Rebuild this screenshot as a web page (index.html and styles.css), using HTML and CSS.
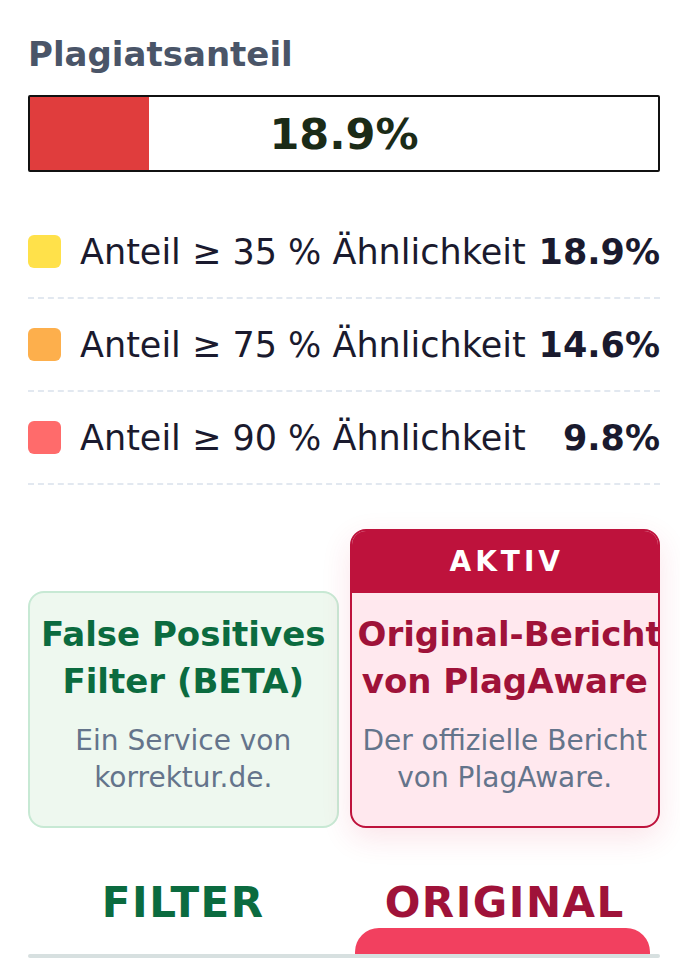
FILE: index.html
```html
<!DOCTYPE html>
<html lang="de">
<head>
<meta charset="UTF-8" />
<meta name="viewport" content="width=device-width, initial-scale=1" />
<title>Plagiatsprüfung - Ergebnis</title>
<link rel="stylesheet" href="styles.css">
</head>
<body>

<main class="report">
  <h2 class="report-title">Plagiatsanteil</h2>

  <div class="meter">
    <div class="meter-fill" style="width:18.9%;"></div>
    <span class="meter-value">18.9%</span>
  </div>

  <ul class="legend">
    <li class="legend-row">
      <span class="swatch swatch-yellow"></span>
      <span class="legend-label">Anteil ≥ 35 % Ähnlichkeit</span>
      <span class="legend-value">18.9%</span>
    </li>
    <li class="legend-row">
      <span class="swatch swatch-orange"></span>
      <span class="legend-label">Anteil ≥ 75 % Ähnlichkeit</span>
      <span class="legend-value">14.6%</span>
    </li>
    <li class="legend-row">
      <span class="swatch swatch-red"></span>
      <span class="legend-label">Anteil ≥ 90 % Ähnlichkeit</span>
      <span class="legend-value">9.8%</span>
    </li>
  </ul>

  <div class="modes">
    <div class="mode mode-filter">
      <div class="mode-body">
        <h3 class="mode-title">False Positives Filter (BETA)</h3>
        <p class="mode-text">Ein Service von korrektur.de.</p>
      </div>
    </div>
    <div class="mode mode-original active">
      <div class="mode-badge">AKTIV</div>
      <div class="mode-body">
        <h3 class="mode-title"><span class="nowrap">Original-Bericht</span> von PlagAware</h3>
        <p class="mode-text">Der offizielle Bericht von PlagAware.</p>
      </div>
    </div>
  </div>

  <div class="tabs">
    <button class="tab tab-filter">FILTER</button>
    <button class="tab tab-original active">ORIGINAL<span class="tab-indicator"></span></button>
  </div>
  <div class="tabs-line"></div>
</main>

</body>
</html>
```

FILE: styles.css
```css
* {
  box-sizing: border-box;
}
body, html {
  margin: 0; padding: 0;
  background: #fff;
  font-family: "DejaVu Sans", Verdana, sans-serif;
  color: #1a1a2e;
}
.report {
  padding: 34px 20px 0 28px;
}
.report-title {
  margin: 0;
  font-size: 34px;
  line-height: 40px;
  font-weight: 700;
  color: #4a5568;
}
.meter {
  position: relative;
  margin-top: 21px;
  height: 77px;
  border: 2px solid #111;
  border-radius: 2px;
  display: flex;
  align-items: center;
  justify-content: center;
}
.meter-fill {
  position: absolute;
  left: 0; top: 0; bottom: 0;
  background: #e03d3d;
}
.meter-value {
  position: relative;
  font-size: 43px;
  font-weight: 700;
  color: #1b2b17;
}
.legend {
  list-style: none;
  margin: 34px 0 0 0;
  padding: 0;
}
.legend-row {
  display: flex;
  align-items: center;
  height: 93px;
  border-bottom: 2px dashed #e2e8f0;
  font-size: 35px;
}
.swatch {
  width: 33px;
  height: 33px;
  border-radius: 6px;
  margin-right: 19px;
  flex-shrink: 0;
}
.swatch-yellow { background: #ffe14a; }
.swatch-orange { background: #fdaf4c; }
.swatch-red { background: #ff6b6b; }
.legend-label {
  flex: 1;
  white-space: nowrap;
}
.legend-value {
  font-weight: 700;
}
.modes {
  display: grid;
  grid-template-columns: 1fr 1fr;
  gap: 11px;
  align-items: end;
  margin-top: 44px;
}
.mode {
  border-radius: 16px;
  border: 2px solid;
  overflow: hidden;
  text-align: center;
}
.mode-body {
  padding: 18px 6px 30px 6px;
}
.mode-title {
  margin: 0;
  font-size: 34px;
  line-height: 47px;
  font-weight: 700;
}
.mode-text {
  margin: 17px 0 0 0;
  font-size: 28px;
  line-height: 37px;
  color: #64748b;
}
.mode-filter {
  background: #eef8ef;
  border-color: #c7e9d4;
}
.mode-filter .mode-title {
  color: #0b6b3f;
}
.mode-original {
  background: #ffe8ee;
  border-color: #be123c;
  box-shadow: 0 10px 30px rgba(225, 29, 72, 0.12);
}
.mode-original .mode-title {
  color: #9f1239;
}
.mode-badge {
  background: #be123c;
  color: #fff;
  height: 62px;
  line-height: 62px;
  font-size: 28px;
  font-weight: 700;
  letter-spacing: 4px;
  padding-left: 4px;
}
.nowrap {
  white-space: nowrap;
}
.tabs {
  display: grid;
  grid-template-columns: 1fr 1fr;
  gap: 11px;
  margin-top: 50px;
}
.tab {
  position: relative;
  background: none;
  border: none;
  padding: 0 0 26px 0;
  font-family: inherit;
  font-size: 42px;
  line-height: 50px;
  font-weight: 700;
  letter-spacing: 1.5px;
  cursor: pointer;
}
.tab-filter { color: #0b6b3f; }
.tab-original { color: #9f1239; }
.tab-indicator {
  position: absolute;
  left: 5px;
  right: 10px;
  bottom: 0;
  height: 26px;
  background: #f2405f;
  border-radius: 24px 24px 0 0;
}
.tabs-line {
  height: 4px;
  border-radius: 2px;
  background: #d7e0e0;
}
```
